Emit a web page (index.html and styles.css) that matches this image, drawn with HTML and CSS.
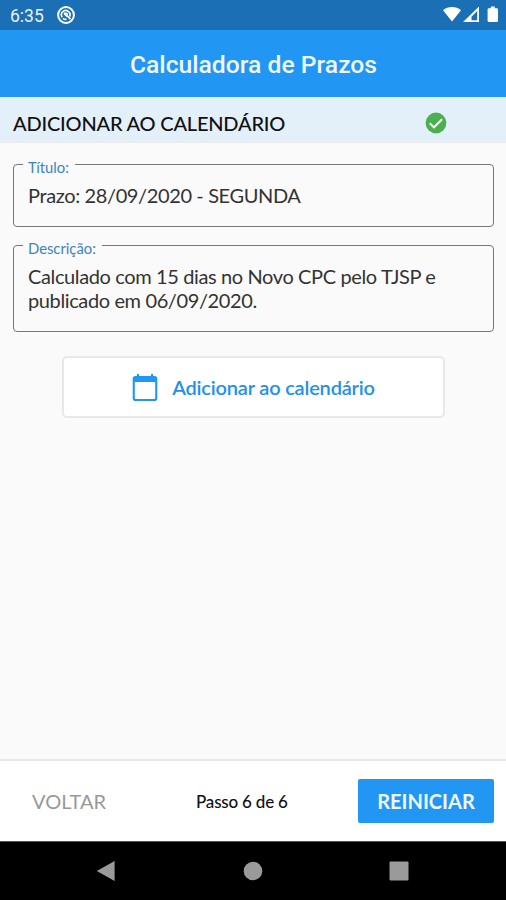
FILE: index.html
```
<!DOCTYPE html>
<html lang="pt-BR">
<head>
  <meta charset="UTF-8" />
  <meta name="viewport" content="width=device-width, initial-scale=1.0"/>
  <title>Calculadora de Prazos</title>
  <link rel="stylesheet" href="styles.css">
</head>
<body>
  <div class="app">
    <!-- Status bar -->
    <div class="status-bar">
      <span class="clock">6:35</span>
      <svg class="notification" width="18" height="18" viewBox="0 0 18 18" fill="none" stroke="#fff">
        <circle cx="9" cy="9" r="7.9" stroke-width="2"/>
        <path d="M5.200 11.300a4.300 4.300 0 1 1 7.400-.6M6 12.300q1.500 1.400 3.500 1" stroke-width="1.600"/>
        <path d="M6.800 7.300h2.400q1 0 1 1v1.500l3.300 3.300M7 7.500l3 3" stroke-width="1.600"/>
      </svg>
      <svg class="signals" width="56" height="18" viewBox="0 0 56 18" fill="#fff">
        <path d="M0 4.200C5-.2 13-.2 18 4.200L9 15.500z"/>
        <path fill-rule="evenodd" d="M20 16L36 0.500V16zM28.500 14.300h5.700V5l-5.700 5.700z"/>
        <path d="M45.800 2.200h2V.5h4v1.700h2q1.200 0 1.200 1.200v11.400q0 1.200-1.200 1.200h-8q-1.200 0-1.200-1.200V3.400q0-1.200 1.200-1.200z"/>
      </svg>
    </div>

    <header class="header">
      <h1>Calculadora de Prazos</h1>
    </header>

    <div class="section-title">
      <h2>ADICIONAR AO CALENDÁRIO</h2>
      <svg width="22" height="22" viewBox="0 0 22 22">
        <circle cx="11" cy="11" r="10.400" fill="#4caf50"/>
        <path d="M4.800 11.300l4.100 4.100 8.200-8.200" fill="none" stroke="#fff" stroke-width="2"/>
      </svg>
    </div>

    <main class="content">
      <fieldset class="field">
        <legend>Título:</legend>
        <p class="value">Prazo: 28/09/2020 - SEGUNDA</p>
      </fieldset>
      <fieldset class="field description">
        <legend>Descrição:</legend>
        <p class="value">Calculado com 15 dias no Novo CPC pelo TJSP e<br>publicado em 06/09/2020.</p>
      </fieldset>

      <button class="calendar-button" type="button">
        <svg width="26" height="29" viewBox="0 0 26 29">
          <path fill="#2196f3" fill-rule="evenodd" d="M5 1h2v2h12V1h2v2h1.500Q25.300 3 25.300 5.800v19.400q0 2.800-2.800 2.800h-19Q.7 28 .7 25.200V5.800Q.7 3 3.500 3H5zM2.800 9v15.900q0 1 1 1h18.400q1 0 1-1V9z"/>
        </svg>
        <span>Adicionar ao calendário</span>
      </button>
    </main>

    <footer class="footer">
      <button class="back" type="button">VOLTAR</button>
      <span class="step">Passo 6 de 6</span>
      <button class="restart" type="button">REINICIAR</button>
    </footer>

    <!-- Android navigation -->
    <nav class="nav-bar">
      <svg width="20" height="22" viewBox="0 0 20 22"><path d="M.8 11L18.600 1v20z" fill="#9a9a9a"/></svg>
      <svg width="20" height="20" viewBox="0 0 20 20"><circle cx="10" cy="10" r="9.300" fill="#9a9a9a"/></svg>
      <svg width="20" height="20" viewBox="0 0 20 20"><rect x=".5" y=".5" width="19" height="19" rx="1" fill="#9a9a9a"/></svg>
    </nav>
  </div>
</body>
</html>
```

FILE: styles.css
```
* {
  box-sizing: border-box;
}

body {
  margin: 0;
  font-family: Lato, sans-serif;
  background-color: #fafafa;
}

h1, h2, p {
  margin: 0;
}

button {
  font-family: inherit;
  border: none;
  background: none;
  padding: 0;
}

.app {
  display: flex;
  flex-direction: column;
  width: 506px;
  height: 900px;
}

.status-bar {
  display: flex;
  align-items: center;
  height: 30px;
  padding: 0 7px 0 10px;
  background-color: #1a6fb5;
}

.clock {
  font-family: Roboto, sans-serif;
  font-size: 17.5px;
  line-height: 32px;
  padding-top: 2px;
  color: #e8f2fb;
}

.notification {
  margin-left: 13px;
}

.signals {
  margin-left: auto;
}

.header {
  display: flex;
  align-items: center;
  justify-content: center;
  height: 67px;
  background-color: #2196f3;
}

.header h1 {
  font-family: Roboto, sans-serif;
  font-size: 24.7px;
  font-weight: 500;
  color: #eef7ff;
  padding: 1px 0 0 1px;
}

.section-title {
  display: flex;
  align-items: center;
  justify-content: space-between;
  height: 46px;
  padding: 7px 59px 0 13px;
  background-color: #e3f0fa;
  border-bottom: 2px solid #ececec;
}

.section-title h2 {
  font-size: 20px;
  font-weight: 500;
  letter-spacing: -0.2px;
  color: #111;
}

.content {
  flex: 1;
  display: flex;
  flex-direction: column;
  padding: 10px 12px 0 13px;
}

.field {
  height: 74px;
  margin: 0 0 7px;
  padding: 0 9px;
  border: 1px solid #777;
  border-radius: 4px;
}

.field.description {
  height: 98px;
  margin-bottom: 24px;
}

.field legend {
  padding: 6px 6px 0 5px;
  font-size: 14.8px;
  line-height: 17px;
  color: #3b83c4;
}

.value {
  padding: 8px 0 0 5px;
  font-size: 20px;
  line-height: 23.5px;
  letter-spacing: -0.38px;
  color: #333;
  white-space: nowrap;
}

.calendar-button {
  display: flex;
  align-items: center;
  justify-content: center;
  gap: 14px;
  width: 383px;
  height: 62px;
  margin: 0 auto;
  background-color: #fff;
  border: 2px solid #e8e8e8;
  border-radius: 5px;
  font-size: 20px;
  font-weight: 600;
  letter-spacing: -0.18px;
  color: #2390ea;
}

.footer {
  display: flex;
  align-items: center;
  height: 82px;
  padding: 0 12px 0 32px;
  background-color: #fff;
  border-top: 2px solid #e8e8e8;
}

.back {
  font-size: 20px;
  color: #999;
}

.step {
  margin: 0 auto 0 90px;
  padding-top: 1px;
  font-size: 17px;
  font-weight: 500;
  letter-spacing: -0.2px;
  color: #111;
}

.restart {
  width: 136px;
  height: 44px;
  background-color: #2196f3;
  border-radius: 2px;
  font-size: 20px;
  font-weight: 700;
  color: #eef7ff;
}

.nav-bar {
  display: flex;
  align-items: center;
  justify-content: space-between;
  height: 59px;
  padding: 0 97px 0 96px;
  background-color: #000;
  border-top: 1px solid #555;
}
```
